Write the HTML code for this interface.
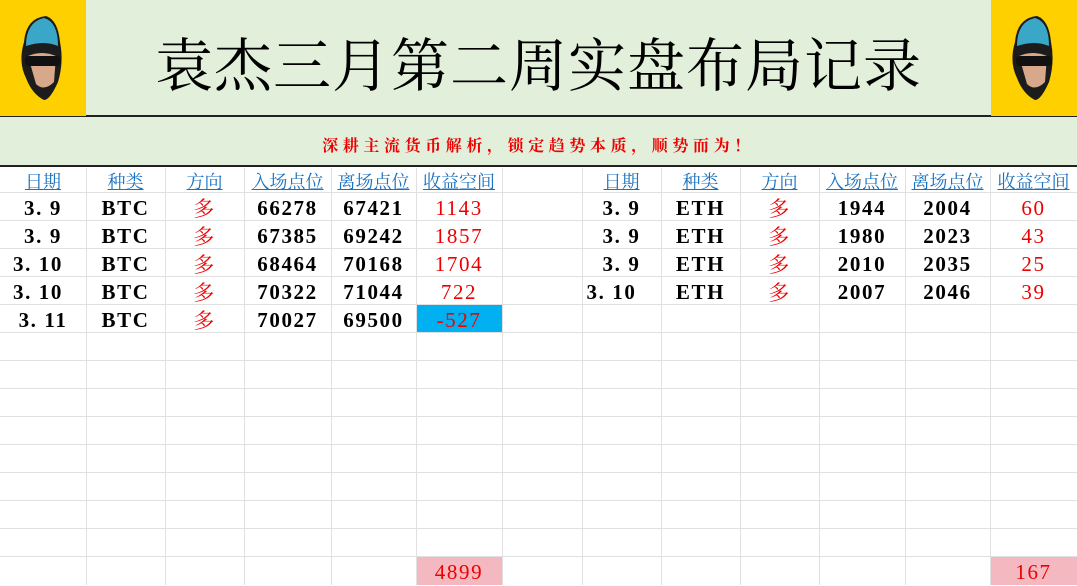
<!DOCTYPE html>
<html><head><meta charset="utf-8"><style>
*{margin:0;padding:0;box-sizing:border-box}
body{width:1077px;height:585px;overflow:hidden;background:#fff;position:relative;font-family:"Liberation Serif","Noto Serif CJK SC",serif}
.a{position:absolute}
.hdr{left:0;top:0;width:1077px;height:117px;background:#e2efda;border-bottom:2px solid #222}
.sub{left:0;top:117px;width:1077px;height:50px;background:#e2efda;border-bottom:2px solid #222}
.logo{top:0;width:86px;height:116px;background:#ffd000}
.title{left:86px;width:905px;top:26px;text-align:center;font-size:58px;line-height:70px;color:#000;font-family:"Noto Serif CJK SC",serif;letter-spacing:1px}
.subt{left:0;width:1077px;top:133px;text-align:center;color:#e00;font-size:16px;font-weight:bold;letter-spacing:4.6px;font-family:"Noto Serif CJK SC",serif}
.vl{top:168px;width:1px;height:417px;background:#e0e0e0}
.hl{left:0;width:1077px;height:1px;background:#e0e0e0}
.c{position:absolute;text-align:center;font-size:21px;line-height:28px;height:28px;font-weight:bold;letter-spacing:1.6px;font-family:"Liberation Serif","Noto Serif CJK SC",serif;color:#000}
.h{color:#1a72c0;text-decoration:underline;font-size:18px;line-height:26px;font-weight:normal;letter-spacing:0;font-family:"Noto Serif CJK SC",serif}
.r{color:#e00;font-weight:normal}
.d{color:#e00;font-weight:normal;font-family:"Noto Serif CJK SC",serif}
</style></head><body>
<div class="a hdr"></div>
<div class="a sub"></div>
<div class="a logo" style="left:0"></div>
<div class="a logo" style="left:991px"></div>
<svg class="a" style="left:14px;top:12px" width="58" height="92" viewBox="0 0 58 92">
<path d="M10 30 Q12 6 32 4 Q44 8 46 30 Q50 50 44 70 Q36 88 30 88 Q18 82 12 66 Q4 50 10 30Z" fill="#1c1c1c"/>
<path d="M12 34 Q12 10 30 6 Q44 10 44 34 Q30 28 12 34Z" fill="#3aa6c8"/>
<path d="M14 44 Q28 38 42 44 L40 70 Q30 80 22 72 Z" fill="#d7a98a"/>
<rect x="11" y="44" width="36" height="10" rx="4" fill="#111"/>
</svg>
<svg class="a" style="left:1005px;top:12px" width="58" height="92" viewBox="0 0 58 92">
<path d="M10 30 Q12 6 32 4 Q44 8 46 30 Q50 50 44 70 Q36 88 30 88 Q18 82 12 66 Q4 50 10 30Z" fill="#1c1c1c"/>
<path d="M12 34 Q12 10 30 6 Q44 10 44 34 Q30 28 12 34Z" fill="#3aa6c8"/>
<path d="M14 44 Q28 38 42 44 L40 70 Q30 80 22 72 Z" fill="#d7a98a"/>
<rect x="11" y="44" width="36" height="10" rx="4" fill="#111"/>
</svg>
<div class="a title">袁杰三月第二周实盘布局记录</div>
<div class="a subt">深耕主流货币解析，锁定趋势本质，顺势而为！</div>

<div class="a" style="left:416px;top:304px;width:86px;height:28px;background:#00b0f0"></div>
<div class="a" style="left:416px;top:556px;width:86px;height:29px;background:#f4b8c0"></div>
<div class="a" style="left:990px;top:556px;width:87px;height:29px;background:#f4b8c0"></div>

<div class="a vl" style="left:86px"></div><div class="a vl" style="left:165px"></div><div class="a vl" style="left:244px"></div><div class="a vl" style="left:331px"></div><div class="a vl" style="left:416px"></div><div class="a vl" style="left:502px"></div><div class="a vl" style="left:582px"></div><div class="a vl" style="left:661px"></div><div class="a vl" style="left:740px"></div><div class="a vl" style="left:819px"></div><div class="a vl" style="left:905px"></div><div class="a vl" style="left:990px"></div>
<div class="a hl" style="top:192px"></div><div class="a hl" style="top:220px"></div><div class="a hl" style="top:248px"></div><div class="a hl" style="top:276px"></div><div class="a hl" style="top:304px"></div><div class="a hl" style="top:332px"></div><div class="a hl" style="top:360px"></div><div class="a hl" style="top:388px"></div><div class="a hl" style="top:416px"></div><div class="a hl" style="top:444px"></div><div class="a hl" style="top:472px"></div><div class="a hl" style="top:500px"></div><div class="a hl" style="top:528px"></div><div class="a hl" style="top:556px"></div>

<div class="c h" style="left:0;width:86px;top:168px">日期</div>
<div class="c h" style="left:86px;width:79px;top:168px">种类</div>
<div class="c h" style="left:165px;width:79px;top:168px">方向</div>
<div class="c h" style="left:244px;width:87px;top:168px">入场点位</div>
<div class="c h" style="left:331px;width:85px;top:168px">离场点位</div>
<div class="c h" style="left:416px;width:86px;top:168px">收益空间</div>
<div class="c h" style="left:582px;width:79px;top:168px">日期</div>
<div class="c h" style="left:661px;width:79px;top:168px">种类</div>
<div class="c h" style="left:740px;width:79px;top:168px">方向</div>
<div class="c h" style="left:819px;width:86px;top:168px">入场点位</div>
<div class="c h" style="left:905px;width:85px;top:168px">离场点位</div>
<div class="c h" style="left:990px;width:87px;top:168px">收益空间</div>

<div class="c" style="left:0;width:86px;top:194px">3. 9</div><div class="c" style="left:86px;width:79px;top:194px">BTC</div><div class="c d" style="left:165px;width:79px;top:194px">多</div><div class="c" style="left:244px;width:87px;top:194px">66278</div><div class="c" style="left:331px;width:85px;top:194px">67421</div><div class="c r" style="left:416px;width:86px;top:194px">1143</div>
<div class="c" style="left:0;width:86px;top:222px">3. 9</div><div class="c" style="left:86px;width:79px;top:222px">BTC</div><div class="c d" style="left:165px;width:79px;top:222px">多</div><div class="c" style="left:244px;width:87px;top:222px">67385</div><div class="c" style="left:331px;width:85px;top:222px">69242</div><div class="c r" style="left:416px;width:86px;top:222px">1857</div>
<div class="c" style="left:0;width:76px;top:250px">3. 10</div><div class="c" style="left:86px;width:79px;top:250px">BTC</div><div class="c d" style="left:165px;width:79px;top:250px">多</div><div class="c" style="left:244px;width:87px;top:250px">68464</div><div class="c" style="left:331px;width:85px;top:250px">70168</div><div class="c r" style="left:416px;width:86px;top:250px">1704</div>
<div class="c" style="left:0;width:76px;top:278px">3. 10</div><div class="c" style="left:86px;width:79px;top:278px">BTC</div><div class="c d" style="left:165px;width:79px;top:278px">多</div><div class="c" style="left:244px;width:87px;top:278px">70322</div><div class="c" style="left:331px;width:85px;top:278px">71044</div><div class="c r" style="left:416px;width:86px;top:278px">722</div>
<div class="c" style="left:0;width:86px;top:306px">3. 11</div><div class="c" style="left:86px;width:79px;top:306px">BTC</div><div class="c d" style="left:165px;width:79px;top:306px">多</div><div class="c" style="left:244px;width:87px;top:306px">70027</div><div class="c" style="left:331px;width:85px;top:306px">69500</div><div class="c r" style="left:416px;width:86px;top:306px">-527</div>
<div class="c r" style="left:416px;width:86px;top:558px">4899</div>

<div class="c" style="left:582px;width:79px;top:194px">3. 9</div><div class="c" style="left:661px;width:79px;top:194px">ETH</div><div class="c d" style="left:740px;width:79px;top:194px">多</div><div class="c" style="left:819px;width:86px;top:194px">1944</div><div class="c" style="left:905px;width:85px;top:194px">2004</div><div class="c r" style="left:990px;width:87px;top:194px">60</div>
<div class="c" style="left:582px;width:79px;top:222px">3. 9</div><div class="c" style="left:661px;width:79px;top:222px">ETH</div><div class="c d" style="left:740px;width:79px;top:222px">多</div><div class="c" style="left:819px;width:86px;top:222px">1980</div><div class="c" style="left:905px;width:85px;top:222px">2023</div><div class="c r" style="left:990px;width:87px;top:222px">43</div>
<div class="c" style="left:582px;width:79px;top:250px">3. 9</div><div class="c" style="left:661px;width:79px;top:250px">ETH</div><div class="c d" style="left:740px;width:79px;top:250px">多</div><div class="c" style="left:819px;width:86px;top:250px">2010</div><div class="c" style="left:905px;width:85px;top:250px">2035</div><div class="c r" style="left:990px;width:87px;top:250px">25</div>
<div class="c" style="left:572px;width:79px;top:278px">3. 10</div><div class="c" style="left:661px;width:79px;top:278px">ETH</div><div class="c d" style="left:740px;width:79px;top:278px">多</div><div class="c" style="left:819px;width:86px;top:278px">2007</div><div class="c" style="left:905px;width:85px;top:278px">2046</div><div class="c r" style="left:990px;width:87px;top:278px">39</div>
<div class="c r" style="left:990px;width:87px;top:558px">167</div>
</body></html>
